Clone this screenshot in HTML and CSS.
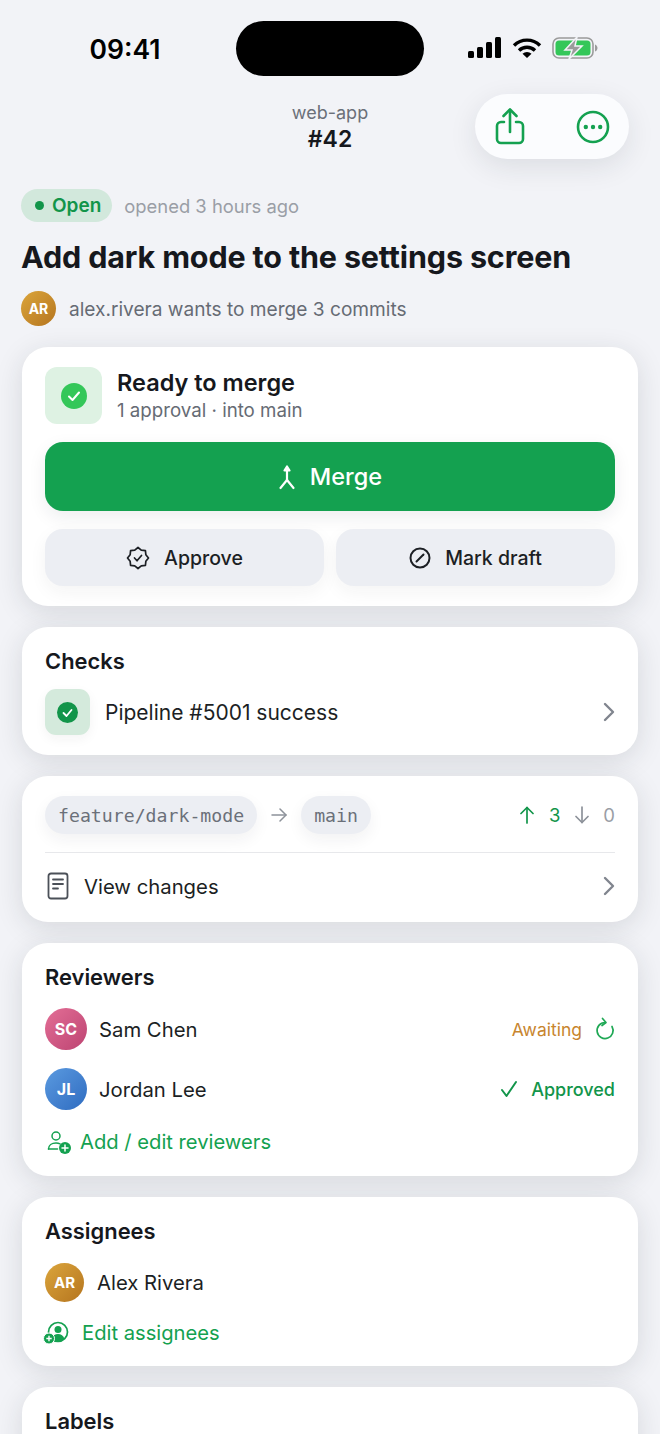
FILE: index.html
```html
<!DOCTYPE html>
<html lang="en">
<head>
  <meta charset="UTF-8">
  <meta name="viewport" content="width=device-width, initial-scale=1.0">
  <title>web-app #42</title>
  <link rel="stylesheet" href="styles.css">
</head>
<body>
  <div class="screen">

    <div class="status-bar">
      <div class="status-time">09:41</div>
      <div class="island"></div>
      <div class="status-icons">
        <svg width="34" height="22" viewBox="0 0 34 22"><rect x="0" y="14" width="6" height="7" rx="1.5"/><rect x="9" y="10" width="6" height="11" rx="1.5"/><rect x="18" y="5" width="6" height="16" rx="1.5"/><rect x="27" y="0" width="6" height="21" rx="1.5"/></svg>
        <svg width="30" height="22" viewBox="0 0 30 22" fill="none" stroke="#000" stroke-width="3.4"><path d="M2 8.5a18.5 18.5 0 0 1 26 0"/><path d="M7 13.5a11.5 11.5 0 0 1 16 0"/><path d="M15 21l-4.500-4.300a6.500 6.500 0 0 1 9 0z" fill="#000" stroke="none"/></svg>
        <svg width="46" height="22" viewBox="0 0 46 22" fill="none"><rect x="1" y="1" width="40" height="20" rx="6" stroke="#9b9b9b" stroke-width="1.600"/><rect x="3.500" y="3.500" width="35" height="15" rx="3.500" fill="#34c759"/><path d="M43 7.500c1.500.5 2.500 2 2.500 3.500s-1 3-2.500 3.500z" fill="#9b9b9b"/><path d="M25 0 13 13h7l-3 9 13-13h-7z" fill="#9b9b9b" stroke="#f2f3f7" stroke-width="1.500"/></svg>
      </div>
    </div>

    <header class="nav">
      <div class="nav-repo">web-app</div>
      <div class="nav-number">#42</div>
      <div class="nav-actions">
        <svg width="32" height="38" viewBox="0 0 32 38" fill="none" stroke="#14a150" stroke-width="2.600" stroke-linecap="round" stroke-linejoin="round"><path d="M10 14H7a4 4 0 0 0-4 4v13a4 4 0 0 0 4 4h18a4 4 0 0 0 4-4V18a4 4 0 0 0-4-4h-3"/><path d="M16 24V2"/><path d="m9.500 8 6.500-6.500L22.500 8"/></svg>
        <svg width="34" height="34" viewBox="0 0 34 34" fill="none"><circle cx="17" cy="17" r="15" stroke="#14a150" stroke-width="2.600"/><circle cx="9.800" cy="17" r="2.200" fill="#14a150"/><circle cx="17" cy="17" r="2.200" fill="#14a150"/><circle cx="24.200" cy="17" r="2.200" fill="#14a150"/></svg>
      </div>
    </header>

    <div class="summary">
      <div class="meta-row">
        <span class="badge-open"><i class="dot"></i>Open</span>
        <span class="meta-time">opened 3 hours ago</span>
      </div>
      <h1 class="mr-title">Add dark mode to the settings screen</h1>
      <div class="author-row">
        <span class="avatar avatar-amber avatar-sm">AR</span>
        <span class="author-text">alex.rivera wants to merge 3 commits</span>
      </div>
    </div>

    <main class="cards">

      <section class="card card-merge">
        <div class="merge-head">
          <div class="tile tile-lg">
            <svg width="26" height="26" viewBox="0 0 26 26"><circle cx="13" cy="13" r="13" fill="#34c759"/><path d="m8 13.500 3.500 3.500L18 9.500" fill="none" stroke="#fff" stroke-width="2" stroke-linecap="round" stroke-linejoin="round"/></svg>
          </div>
          <div>
            <div class="merge-title">Ready to merge</div>
            <div class="merge-sub">1 approval · into main</div>
          </div>
        </div>
        <button class="btn-merge">
          <svg width="18" height="26" viewBox="0 0 18 26" fill="none" stroke="#fff" stroke-width="2.200" stroke-linecap="round" stroke-linejoin="round"><path d="M9 4v12"/><path d="M6.500 6.500 9 2.500l2.500 4z" fill="#fff"/><path d="M9 16 2.500 24"/><path d="m9 16 6.500 8"/></svg>
          Merge
        </button>
        <div class="btn-row">
          <button class="btn-soft">
            <svg width="24" height="24" viewBox="0 0 24 24" fill="none" stroke="#1c1f24" stroke-width="1.700" stroke-linecap="round" stroke-linejoin="round"><path d="M22.500 12l-2.650 3.250-.43 4.170-4.170.43L12 22.500l-3.250-2.650-4.170-.43-.43-4.170L1.500 12l2.650-3.250.43-4.170 4.170-.43L12 1.500l3.250 2.650 4.170.43.43 4.170z"/><path d="m8.500 12 2.500 2.800 4.500-5.300"/></svg>
            Approve
          </button>
          <button class="btn-soft">
            <svg width="22" height="22" viewBox="0 0 22 22" fill="none" stroke="#1c1f24" stroke-width="2" stroke-linecap="round"><circle cx="11" cy="11" r="9.500"/><path d="m7.500 14.500 7-7"/></svg>
            Mark draft
          </button>
        </div>
      </section>

      <section class="card card-checks">
        <h2 class="card-title">Checks</h2>
        <div class="check-row">
          <div class="tile tile-md">
            <svg width="21" height="21" viewBox="0 0 21 21"><circle cx="10.500" cy="10.500" r="10.500" fill="#12954a"/><path d="m6.500 11 3 3 5-6" fill="none" stroke="#fff" stroke-width="1.800" stroke-linecap="round" stroke-linejoin="round"/></svg>
          </div>
          <span class="row-text row-text-lg">Pipeline #5001 success</span>
          <svg class="chevron" width="12" height="20" viewBox="0 0 12 20" fill="none" stroke="#80858e" stroke-width="2.400" stroke-linecap="round" stroke-linejoin="round"><path d="m2 2 8 8-8 8"/></svg>
        </div>
      </section>

      <section class="card card-branch">
        <div class="branch-row">
          <span class="branch-pill">feature/dark-mode</span>
          <svg width="16" height="14" viewBox="0 0 16 14" fill="none" stroke="#8d929a" stroke-width="1.500" stroke-linecap="round" stroke-linejoin="round"><path d="M1 7h14"/><path d="m9 1 6 6-6 6"/></svg>
          <span class="branch-pill">main</span>
          <div class="diff-stat">
            <svg width="14" height="18" viewBox="0 0 14 18" fill="none" stroke="#12954a" stroke-width="1.700" stroke-linecap="round" stroke-linejoin="round"><path d="M7 17V1.500"/><path d="M1 7.500 7 1.500l6 6"/></svg>
            <span class="diff-add">3</span>
            <svg width="14" height="18" viewBox="0 0 14 18" fill="none" stroke="#8d929a" stroke-width="1.700" stroke-linecap="round" stroke-linejoin="round"><path d="M7 1v15.500"/><path d="m1 10.500 6 6 6-6"/></svg>
            <span class="diff-del">0</span>
          </div>
        </div>
        <div class="changes-row">
          <svg width="22" height="28" viewBox="0 0 22 28" fill="none" stroke="#4b5058" stroke-width="1.800" stroke-linecap="round"><rect x="1.500" y="1.500" width="19" height="25" rx="2.500"/><path d="M6 7.500h10"/><path d="M6 12h10"/><path d="M6 16.500h5"/></svg>
          <span class="row-text">View changes</span>
          <svg class="chevron" width="12" height="20" viewBox="0 0 12 20" fill="none" stroke="#80858e" stroke-width="2.400" stroke-linecap="round" stroke-linejoin="round"><path d="m2 2 8 8-8 8"/></svg>
        </div>
      </section>

      <section class="card card-reviewers">
        <h2 class="card-title">Reviewers</h2>
        <div class="people">
          <div class="person">
            <span class="avatar avatar-pink">SC</span>
            <span class="row-text">Sam Chen</span>
            <div class="state state-wait">
              Awaiting
              <svg width="20" height="24" viewBox="0 0 20 24" fill="none" stroke="#1fa855" stroke-width="1.700" stroke-linecap="round" stroke-linejoin="round"><path d="M10 5.500A8 8 0 1 0 17 9.500"/><path d="m7.500 1.500 3.500 4-4 3"/></svg>
            </div>
          </div>
          <div class="person">
            <span class="avatar avatar-blue">JL</span>
            <span class="row-text">Jordan Lee</span>
            <div class="state state-ok">
              <svg width="18" height="18" viewBox="0 0 18 18" fill="none" stroke="#12954a" stroke-width="2" stroke-linecap="round" stroke-linejoin="round"><path d="m2 10 4.500 6L16 2"/></svg>
              Approved
            </div>
          </div>
        </div>
        <a class="link-row link-reviewers">
          <svg width="24" height="24" viewBox="0 0 24 24" fill="none" stroke="#14a150" stroke-width="1.500" stroke-linecap="round"><circle cx="9" cy="6" r="4"/><path d="M1.500 19c0-4 3.500-6 7.500-6 1.500 0 3 .3 4 .8"/><path d="M1.500 19h9"/><circle cx="18" cy="18" r="6" fill="#14a150" stroke="none"/><path d="M18 15v6M15 18h6" stroke="#fff"/></svg>
          Add / edit reviewers
        </a>
      </section>

      <section class="card card-assignees">
        <h2 class="card-title">Assignees</h2>
        <div class="person">
          <span class="avatar avatar-amber avatar-md">AR</span>
          <span class="row-text">Alex Rivera</span>
        </div>
        <a class="link-row link-assignees">
          <svg width="26" height="24" viewBox="0 0 26 24" fill="none" stroke="#14a150" stroke-width="1.700"><circle cx="15" cy="11" r="9.500"/><circle cx="15" cy="8.500" r="3.500" fill="#14a150" stroke="none"/><path d="M8.500 18c1-3.500 3.500-5 6.500-5s5.500 1.500 6.500 5c-1.800 1.800-4 2.500-6.500 2.500s-4.700-.7-6.500-2.500z" fill="#14a150" stroke="none"/><circle cx="6" cy="17.500" r="5.500" fill="#14a150" stroke="#fff" stroke-width="1"/><path d="M6 14.800v5.400M3.300 17.500h5.400" stroke="#fff" stroke-width="1.400"/></svg>
          Edit assignees
        </a>
      </section>

      <section class="card card-labels">
        <h2 class="card-title">Labels</h2>
      </section>

    </main>
  </div>
</body>
</html>
```

FILE: styles.css
```css
html, body {
  margin: 0;
  padding: 0;
}

body {
  background: #f2f3f7;
  font-family: 'Inter', 'Liberation Sans', sans-serif;
  color: #16181d;
}

button {
  font-family: inherit;
  border: none;
}

.screen {
  height: 100vh;
  overflow: hidden;
}

/* status bar */
.status-bar {
  display: grid;
  grid-template-columns: 1fr 188px 1fr;
  align-items: center;
  padding-top: 21px;
}

.status-time {
  padding-left: 14px;
  text-align: center;
  font-size: 26.500px;
  font-weight: 600;
  color: #000;
}

.island {
  height: 55px;
  background: #000;
  border-radius: 28px;
}

.status-icons {
  display: flex;
  align-items: center;
  gap: 10px;
  padding-left: 44px;
  margin-top: -2px;
}

/* nav */
.nav {
  position: relative;
  height: 65px;
  margin-top: 18px;
  display: flex;
  flex-direction: column;
  align-items: center;
  justify-content: center;
}

.nav-repo {
  font-size: 18px;
  line-height: 24px;
  color: #6b7079;
}

.nav-number {
  font-size: 23px;
  line-height: 28px;
  font-weight: 600;
}

.nav-actions {
  position: absolute;
  top: 0;
  right: 31px;
  width: 154px;
  height: 65px;
  box-sizing: border-box;
  padding: 0 19px 0 19px;
  display: flex;
  align-items: center;
  justify-content: space-between;
  background: #fbfcfe;
  border-radius: 33px;
  box-shadow: 0 8px 28px rgba(30, 36, 48, 0.1);
}

/* summary */
.summary {
  padding: 30px 22px 0 21px;
}

.meta-row {
  display: flex;
  align-items: center;
  gap: 12px;
}

.badge-open {
  display: flex;
  align-items: center;
  gap: 8px;
  height: 33px;
  padding: 0 11px 0 14px;
  border-radius: 17px;
  background: #d2e8dc;
  color: #12954a;
  font-size: 19px;
  font-weight: 600;
}

.dot {
  width: 9px;
  height: 9px;
  border-radius: 50%;
  background: #12954a;
}

.meta-time {
  font-size: 18.400px;
  color: #9a9ea6;
}

.mr-title {
  margin: 15px 0 0 0;
  font-size: 30.500px;
  line-height: 40px;
  font-weight: 700;
  letter-spacing: -0.15px;
}

.author-row {
  display: flex;
  align-items: center;
  gap: 13px;
  margin-top: 14px;
}

.author-text {
  font-size: 19.100px;
  color: #666b74;
}

/* avatars */
.avatar {
  flex: none;
  width: 42px;
  height: 42px;
  border-radius: 50%;
  display: flex;
  align-items: center;
  justify-content: center;
  color: #fff;
  font-size: 16px;
  font-weight: 700;
}

.avatar-sm {
  width: 35px;
  height: 35px;
  font-size: 14px;
}

.avatar-md {
  width: 39px;
  height: 39px;
  font-size: 15px;
}

.avatar-amber {
  background: linear-gradient(135deg, #dba53c, #b5751f);
}

.avatar-pink {
  background: linear-gradient(135deg, #e36e96, #bd4472);
}

.avatar-blue {
  background: linear-gradient(135deg, #5b9ae0, #2f6cc0);
}

/* cards */
.cards {
  display: flex;
  flex-direction: column;
  gap: 21px;
  margin-top: 21px;
  padding: 0 22px;
}

.card {
  flex: none;
  box-sizing: border-box;
  background: #fff;
  border-radius: 26px;
  padding: 20px 23px;
  box-shadow: 0 6px 28px rgba(30, 36, 48, 0.13);
}

.card-title {
  margin: 0;
  font-size: 21.900px;
  line-height: 28px;
  font-weight: 600;
}

.row-text {
  font-size: 20.300px;
  color: #1c1f24;
}

.row-text-lg {
  font-size: 21px;
}

.chevron {
  margin-left: auto;
}

.tile {
  flex: none;
  display: flex;
  align-items: center;
  justify-content: center;
}

.tile-lg {
  width: 57px;
  height: 57px;
  border-radius: 12px;
  background: #def2e3;
}

.tile-md {
  width: 45px;
  height: 46px;
  border-radius: 11px;
  background: #d4eadc;
}

/* merge card */
.merge-head {
  display: flex;
  align-items: center;
  gap: 15px;
}

.merge-title {
  font-size: 23.500px;
  line-height: 30px;
  font-weight: 600;
}

.merge-sub {
  font-size: 18.700px;
  line-height: 26px;
  color: #666b74;
}

.btn-merge {
  width: 100%;
  height: 69px;
  margin-top: 18px;
  display: flex;
  align-items: center;
  justify-content: center;
  gap: 14px;
  background: #14a150;
  color: #fff;
  border-radius: 18px;
  font-size: 23.500px;
  font-weight: 500;
  box-shadow: 0 6px 18px rgba(30, 36, 48, 0.08);
}

.btn-row {
  display: grid;
  grid-template-columns: 1fr 1fr;
  gap: 12px;
  margin-top: 18px;
}

.btn-soft {
  height: 57px;
  display: flex;
  align-items: center;
  justify-content: center;
  gap: 14px;
  background: #eceef3;
  color: #1c1f24;
  border-radius: 18px;
  font-size: 19.500px;
  font-weight: 500;
  box-shadow: 0 6px 18px rgba(30, 36, 48, 0.05);
}

/* checks */
.check-row {
  display: flex;
  align-items: center;
  gap: 15px;
  margin-top: 14px;
}

.check-row .tile {
  box-shadow: 0 4px 12px rgba(30, 36, 48, 0.05);
}

/* branch */
.card-branch {
  padding-bottom: 22px;
}

.branch-row {
  display: flex;
  align-items: center;
  gap: 14px;
  padding-bottom: 18px;
  border-bottom: 1px solid #e7e8eb;
}

.branch-pill {
  height: 38px;
  display: flex;
  align-items: center;
  padding: 0 13px;
  border-radius: 19px;
  background: #eceef3;
  color: #6b7079;
  font-family: 'DejaVu Sans Mono', 'Liberation Mono', monospace;
  font-size: 18.200px;
  box-shadow: 0 6px 16px rgba(30, 36, 48, 0.06);
}

.diff-stat {
  margin-left: auto;
  display: flex;
  align-items: center;
  gap: 14.500px;
  font-size: 18.500px;
}

.diff-add {
  color: #12954a;
}

.diff-del {
  color: #9a9ea6;
}

.changes-row {
  display: flex;
  align-items: center;
  gap: 15px;
  margin-top: 19px;
  margin-left: 2px;
}

/* people */
.card-reviewers {
  padding-bottom: 22px;
}

.people {
  display: flex;
  flex-direction: column;
  gap: 18px;
  margin-top: 17px;
}

.person {
  display: flex;
  align-items: center;
  gap: 12px;
}

.state {
  margin-left: auto;
  display: flex;
  align-items: center;
  gap: 13px;
  font-size: 18px;
  font-weight: 500;
}

.state-wait {
  color: #c8852e;
  font-size: 17.500px;
  font-weight: 400;
}

.state-ok {
  color: #12954a;
}

.link-row {
  display: flex;
  align-items: center;
  font-size: 20.200px;
  color: #14a150;
}

.link-reviewers {
  gap: 9px;
  margin-top: 19px;
  margin-left: 2px;
}

.link-assignees {
  gap: 13px;
  margin-top: 18px;
  margin-left: -2px;
}

.card-assignees {
  padding-bottom: 21px;
}

.card-assignees .person {
  margin-top: 18px;
  gap: 13px;
}

.card-labels {
  height: 200px;
}
```
